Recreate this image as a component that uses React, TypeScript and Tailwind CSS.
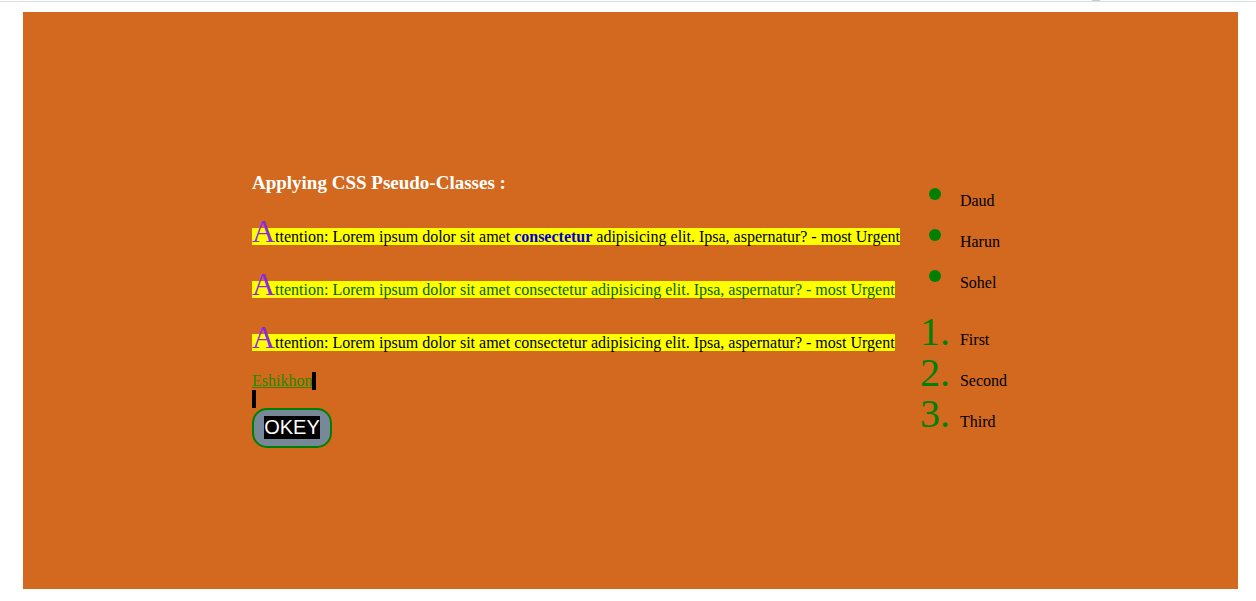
import { Fragment } from "react";
import type { ReactNode } from "react";

function Notice({ className, children }: { className: string; children: ReactNode }) {
  return (
    <p className={`leading-[53px] whitespace-nowrap ${className}`}>
      <span className="bg-[#ffff00]">
        <span className="text-[32px] leading-none text-[#8a2be2]">A</span>
        {children} - most Urgent
      </span>
    </p>
  );
}

const people = ["Daud", "Harun", "Sohel"];
const places = ["First", "Second", "Third"];

export default function App() {
  return (
    <Fragment>
      <header className="flex h-[2px] flex-col border-b border-[#dadfe0] bg-white">
        <div className="mr-[156px] h-px w-2 self-end bg-[#c8cccc]" />
      </header>
      <main className="mx-[18px] mt-[10px] mb-3 ml-[23px] flex min-h-[577px] items-center justify-center bg-[#d2691e] font-['Liberation_Serif',serif] text-[16px] text-black">
        <section className="pt-[19px]">
          <h1 className="mb-4 text-[19px] leading-[22px] font-bold text-white">
            Applying CSS Pseudo-Classes :
          </h1>
          <Notice className="text-black">
            ttention: Lorem ipsum dolor sit amet <b className="text-[#0000cd]">consectetur</b> adipisicing elit. Ipsa, aspernatur?
          </Notice>
          <Notice className="text-[#006400]">
            ttention: Lorem ipsum dolor sit amet consectetur adipisicing elit. Ipsa, aspernatur?
          </Notice>
          <Notice className="text-black">
            ttention: Lorem ipsum dolor sit amet consectetur adipisicing elit. Ipsa, aspernatur?
          </Notice>
          <div className="mt-[3px] flex h-[18px]">
            <a href="#eshikhon" className="leading-[18px] text-[#228b00] underline">Eshikhon</a>
            <span className="w-1 bg-black" />
          </div>
          <div className="h-[18px] w-1 bg-black" />
          <button
            type="button"
            className="flex h-10 w-20 items-center justify-center rounded-[15px] border-2 border-[#008000] bg-[#778899] pb-[2px] font-['Liberation_Sans',sans-serif] text-[20px] leading-[23px] text-white"
          >
            <span className="bg-black">OKEY</span>
          </button>
        </section>
        <section className="pt-3 pr-[2px] pl-[60px] leading-[33px]">
          <ul className="mb-4 list-disc marker:text-[40px] marker:text-[#008000]">
            {people.map((name) => <li key={name}>{name}</li>)}
          </ul>
          <ol className="list-decimal marker:text-[40px] marker:text-[#008000]">
            {places.map((place) => <li key={place}>{place}</li>)}
          </ol>
        </section>
      </main>
    </Fragment>
  );
}
